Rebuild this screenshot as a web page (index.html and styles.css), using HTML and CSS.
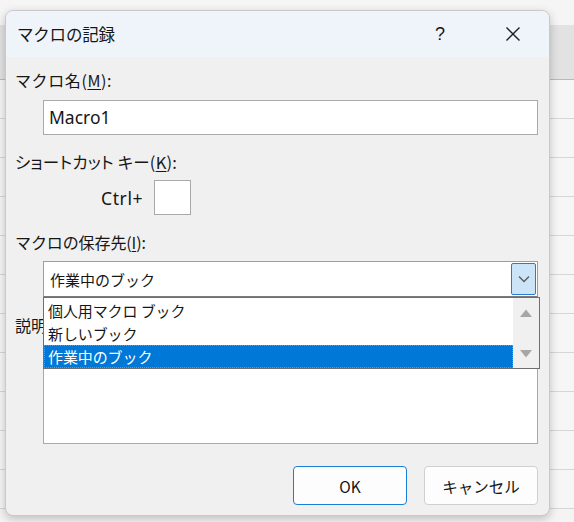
FILE: index.html
```html
<!DOCTYPE html>
<html lang="ja">
<head>
<meta charset="utf-8">
<link rel="stylesheet" href="styles.css">
</head>
<body>
<div class="sheet">
  <div class="sheet-top"></div>
  <div class="sheet-head"></div>
  <div class="row"></div><div class="row"></div><div class="row"></div><div class="row"></div>
  <div class="row"></div><div class="row"></div><div class="row"></div><div class="row"></div>
  <div class="row"></div><div class="row"></div><div class="row"></div>
</div>

<div class="dialog">
  <div class="titlebar">
    <span class="title">マクロの記録</span>
    <span class="help">?</span>
    <span class="close">
      <svg width="16" height="16" viewBox="0 0 16 16"><path d="M1.5 1.5 L14.5 14.5 M14.5 1.5 L1.5 14.5" stroke="#1f1f1f" stroke-width="1.4" fill="none"/></svg>
    </span>
  </div>
  <div class="content">
    <div class="label l1">マクロ名(<u>M</u>):</div>
    <div class="field textbox">Macro1</div>

    <div class="label l2">ショートカット キー(<u>K</u>):</div>
    <div class="ctrl-row">
      <span class="ctrl">Ctrl+</span>
      <span class="keybox"></span>
    </div>

    <div class="label l3">マクロの保存先(<u>I</u>):</div>
    <div class="combo-wrap">
      <div class="field combo">
        <span>作業中のブック</span>
        <span class="drop-btn">
          <svg width="12" height="8" viewBox="0 0 12 8"><path d="M1 1.5 L6 6.5 L11 1.5" stroke="#5a5a5a" stroke-width="1.3" fill="none"/></svg>
        </span>
      </div>
      <div class="listbox">
        <div class="items">
          <div class="item">個人用マクロ ブック</div>
          <div class="item">新しいブック</div>
          <div class="item selected">作業中のブック</div>
        </div>
        <div class="scroll">
          <svg width="12" height="8" viewBox="0 0 12 8"><path d="M0 8 L6 0.5 L12 8 Z" fill="#a6a6a6"/></svg>
          <svg width="12" height="8" viewBox="0 0 12 8"><path d="M0 0 L6 7.5 L12 0 Z" fill="#a6a6a6"/></svg>
        </div>
      </div>
    </div>

    <div class="label l4">説明(<u>D</u>):</div>
    <div class="field memo"></div>

    <div class="buttons">
      <button class="btn default">OK</button>
      <button class="btn">キャンセル</button>
    </div>
  </div>
</div>
</body>
</html>
```

FILE: styles.css
```css
html, body {
  margin: 0;
  padding: 0;
}
body {
  width: 574px;
  height: 522px;
  overflow: hidden;
  position: relative;
  font-family: "Noto Sans CJK JP", "Noto Sans", sans-serif;
  color: #161616;
  background: #f4f4f4;
}
.sheet {
  display: flex;
  flex-direction: column;
  height: 522px;
}
.sheet-top {
  height: 25px;
  background: #f5f5f5;
  flex: none;
}
.sheet-head {
  height: 54px;
  flex: none;
  background: #e2e2e2;
  border-bottom: 1px solid #b9b9b9;
}
.row {
  height: 38px;
  flex: none;
  background: #f6f6f6;
  border-bottom: 1px solid #d6d6d6;
}

.dialog {
  position: absolute;
  left: 5px;
  top: 10px;
  width: 543px;
  height: 504px;
  background: #f0f0f0;
  border: 1px solid #c9c9c9;
  border-radius: 8px;
  box-shadow: 0 3px 10px rgba(0, 0, 0, 0.22);
  overflow: hidden;
  display: flex;
  flex-direction: column;
}
.titlebar {
  height: 46px;
  flex: none;
  background: #eef4fa;
  display: flex;
  align-items: center;
  font-size: 16.5px;
}
.title {
  margin-left: 11px;
  flex: 1;
  letter-spacing: -0.2px;
}
.help {
  width: 20px;
  text-align: center;
  font-family: "Liberation Sans", sans-serif;
  font-size: 18px;
  margin-right: 55px;
}
.close {
  width: 16px;
  height: 16px;
  margin-right: 28px;
  display: flex;
}

.content {
  display: flex;
  flex-direction: column;
  padding: 0 9px 0 9px;
}
.label {
  font-size: 16px;
  line-height: 22px;
  height: 22px;
  white-space: nowrap;
}
.label u {
  text-underline-offset: 2px;
}
.l1 { margin-top: 12px; letter-spacing: 0.6px; }
.l2 { margin-top: 16px; font-size: 16.5px; font-feature-settings: "palt"; letter-spacing: 0.2px; }
.l3 { margin-top: 16px; letter-spacing: -0.1px; }
.l4 {
  margin-top: 17px;
  width: 28px;
  overflow: hidden;
}

.field {
  margin-left: 28px;
  width: 495px;
  background: #ffffff;
  border: 1px solid #a9a9a9;
  box-sizing: border-box;
}
.textbox {
  margin-top: 9px;
  height: 35px;
  padding-left: 5px;
  line-height: 33px;
  font-family: "Noto Sans", sans-serif;
  font-size: 17.5px;
}
.ctrl-row {
  margin-top: 7px;
  height: 35px;
  display: flex;
  align-items: center;
  padding-left: 86px;
}
.ctrl {
  font-family: "Noto Sans", sans-serif;
  font-size: 17.5px;
  letter-spacing: 0.6px;
  width: 53px;
}
.keybox {
  width: 37px;
  height: 35px;
  box-sizing: border-box;
  background: #fff;
  border: 1px solid #a9a9a9;
}

.combo-wrap {
  position: relative;
  margin-top: 8px;
  height: 36px;
}
.combo {
  height: 36px;
  display: flex;
  align-items: center;
  justify-content: space-between;
  padding-left: 6px;
  padding-right: 1px;
  font-size: 15px;
  border-color: #9e9e9e;
  border-bottom-color: #7a7a7a;
}
.drop-btn {
  width: 25px;
  height: 32px;
  box-sizing: border-box;
  background: #cce4f7;
  border: 1px solid #2b7bd0;
  border-radius: 2px;
  display: flex;
  align-items: center;
  justify-content: center;
}
.listbox {
  position: absolute;
  left: 28px;
  top: 36px;
  width: 497px;
  height: 72px;
  box-sizing: border-box;
  border: 1px solid #6f6f6f;
  background: #fff;
  display: flex;
  z-index: 2;
}
.items {
  flex: 1;
  display: flex;
  flex-direction: column;
  padding-top: 1px;
}
.item {
  height: 23px;
  line-height: 23px;
  font-size: 15px;
  padding-left: 4px;
  letter-spacing: -0.1px;
}
.item.selected {
  background: #0078d7;
  color: #fff;
  outline: 1px dotted #c9832f;
  outline-offset: -1px;
}
.scroll {
  width: 26px;
  background: #f0f0f0;
  display: flex;
  flex-direction: column;
  align-items: center;
  justify-content: space-between;
  padding: 11px 0 10px 0;
}

.memo {
  margin-top: 10px;
  height: 98px;
}
.buttons {
  margin-top: 22px;
  display: flex;
  justify-content: flex-end;
  gap: 17px;
  padding-right: 2px;
}
.btn {
  width: 114px;
  height: 39px;
  box-sizing: border-box;
  background: #fdfdfd;
  border: 1px solid #cfcfcf;
  border-radius: 4px;
  font-family: "Noto Sans CJK JP", "Noto Sans", sans-serif;
  font-size: 15.5px;
  color: #161616;
  padding: 0;
}
.btn.default {
  border: 1.5px solid #1a7fd4;
}
```
